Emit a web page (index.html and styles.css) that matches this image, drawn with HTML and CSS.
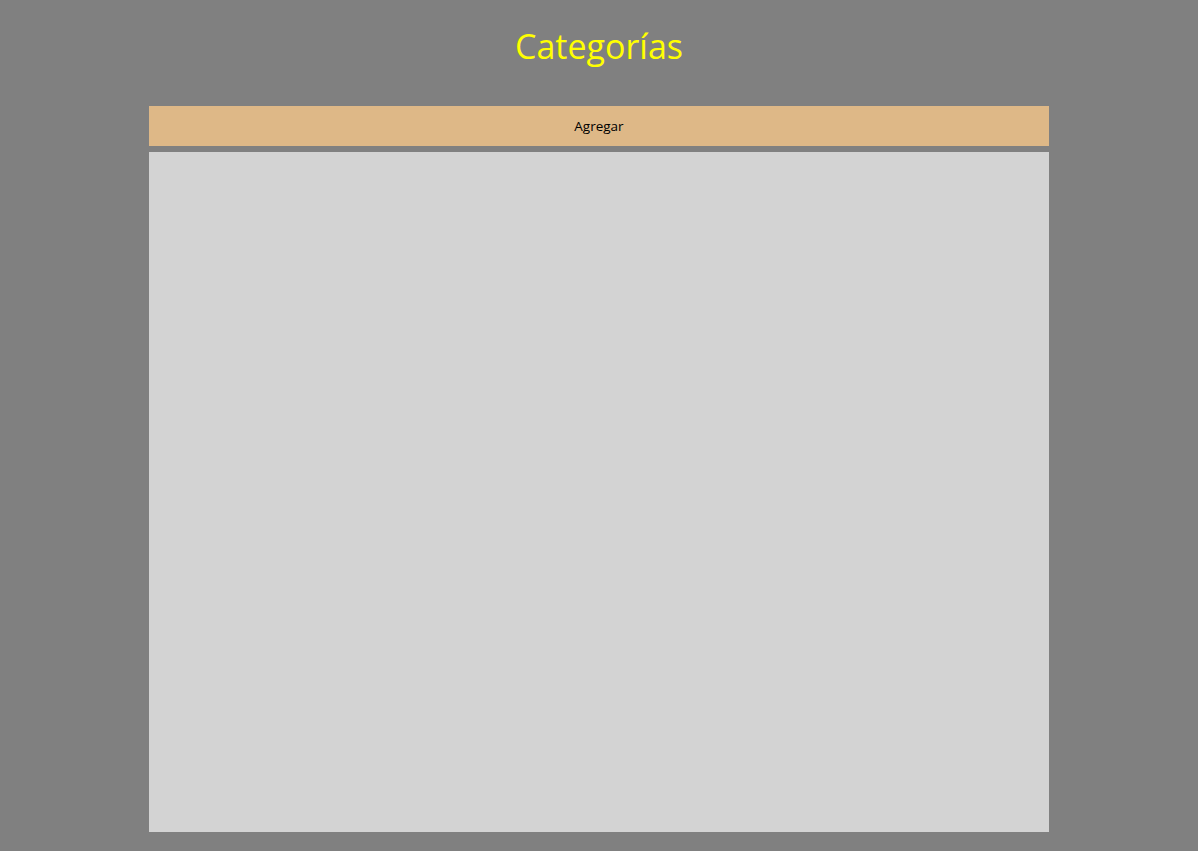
FILE: index.html
```html
<!DOCTYPE html>
<html lang="es">
<head>
<meta charset="utf-8">
<title>Categorías</title>
<link rel="stylesheet" href="styles.css">
</head>
<body>
<div class="page">
  <h1 class="title">Categorías</h1>
  <div class="content">
    <button class="add-btn" type="button">Agregar</button>
    <div class="list"></div>
  </div>
</div>
</body>
</html>
```
FILE: styles.css
```css
html, body {
  margin: 0;
  padding: 0;
  height: 100%;
}
body {
  background: #808080;
  font-family: "Open Sans", "Noto Sans", sans-serif;
  overflow: hidden;
}
.page {
  display: flex;
  flex-direction: column;
  align-items: center;
  height: 851px;
  box-sizing: border-box;
  padding-top: 26px;
}
.title {
  margin: 0;
  height: 80px;
  font-weight: 400;
  font-size: 34px;
  line-height: 40px;
  color: #ffff00;
}
.content {
  width: 900px;
  display: flex;
  flex-direction: column;
  gap: 6px;
}
.add-btn {
  height: 40px;
  border: none;
  background: #deb887;
  color: #000;
  font-family: "Open Sans", "Noto Sans", sans-serif;
  font-size: 13.5px;
  padding: 0;
  cursor: pointer;
}
.list {
  height: 680px;
  background: #d3d3d3;
}
```
